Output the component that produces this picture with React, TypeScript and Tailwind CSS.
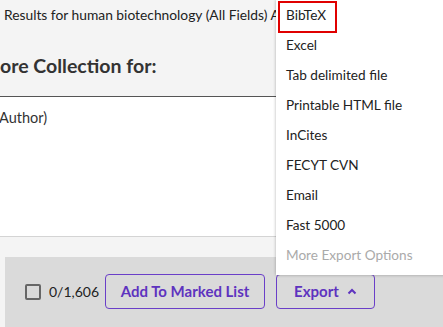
import React from "react";

const font = { fontFamily: "Lato, 'Noto Sans', sans-serif" };

export default function App() {
  const items = [
    "BibTeX",
    "Excel",
    "Tab delimited file",
    "Printable HTML file",
    "InCites",
    "FECYT CVN",
    "Email",
    "Fast 5000",
  ];
  return (
    <div
      className="relative w-[443px] h-[327px] overflow-hidden bg-[#f4f4f4] text-[#222]"
      style={font}
    >
      <div className="h-[30px] w-[276px] overflow-hidden pl-[4px] flex items-center text-[13.8px] whitespace-nowrap">
        Results for human biotechnology (All Fields) AND
      </div>
      <div className="h-[66px] w-[276px] overflow-hidden flex items-center pt-[6px] text-[19.5px] font-bold text-[#333] whitespace-nowrap">
        ore Collection for:
      </div>
      <div className="h-[141px] bg-white border-t border-t-[#555] border-b border-b-[#d4d4d4] w-[290px]">
        <div className="h-[42px] flex items-center text-[14.5px] text-[#333] -ml-[1px]">Author)</div>
      </div>
      <div className="mt-[20px] ml-[5px] h-[80px] bg-[#dadada] flex items-start pt-[17px] pl-[20px]">
        <div className="h-[35px] w-[80px] flex items-center">
          <div className="w-[16px] h-[16px] border-2 border-[#666] rounded-[2px] bg-transparent" />
          <span className="ml-[8px] text-[14px] text-[#222]">0/1,606</span>
        </div>
        <button className="h-[35px] w-[160px] border border-[#6a3fc8] rounded-[4px] text-[#5e33bf] font-bold text-[15px] flex items-center justify-center">
          Add To Marked List
        </button>
        <button className="ml-[11px] h-[35px] w-[99px] border border-[#6a3fc8] rounded-[4px] text-[#5e33bf] font-bold text-[15px] flex items-center justify-center gap-[8px]">
          Export
          <svg width="10" height="7" viewBox="0 0 10 7" fill="none">
            <path d="M1.5 5.5L5 2L8.5 5.5" stroke="#5e33bf" strokeWidth="2" />
          </svg>
        </button>
      </div>

      <div className="absolute left-[276px] top-0 w-[180px] h-[275px] bg-white shadow-[0_0_3px_rgba(0,0,0,0.3)]">
        {items.map((t, i) => (
          <div key={t} className="h-[30px] flex items-center pl-[10px] text-[13.6px] text-[#222] relative">
            {i === 0 && (
              <div className="absolute left-[2px] top-[1px] w-[59px] h-[32px] border-2 border-[#e00000]" />
            )}
            {t}
          </div>
        ))}
        <div className="h-[30px] flex items-center pl-[10px] text-[13.6px] text-[#aaa]">More Export Options</div>
      </div>
    </div>
  );
}
